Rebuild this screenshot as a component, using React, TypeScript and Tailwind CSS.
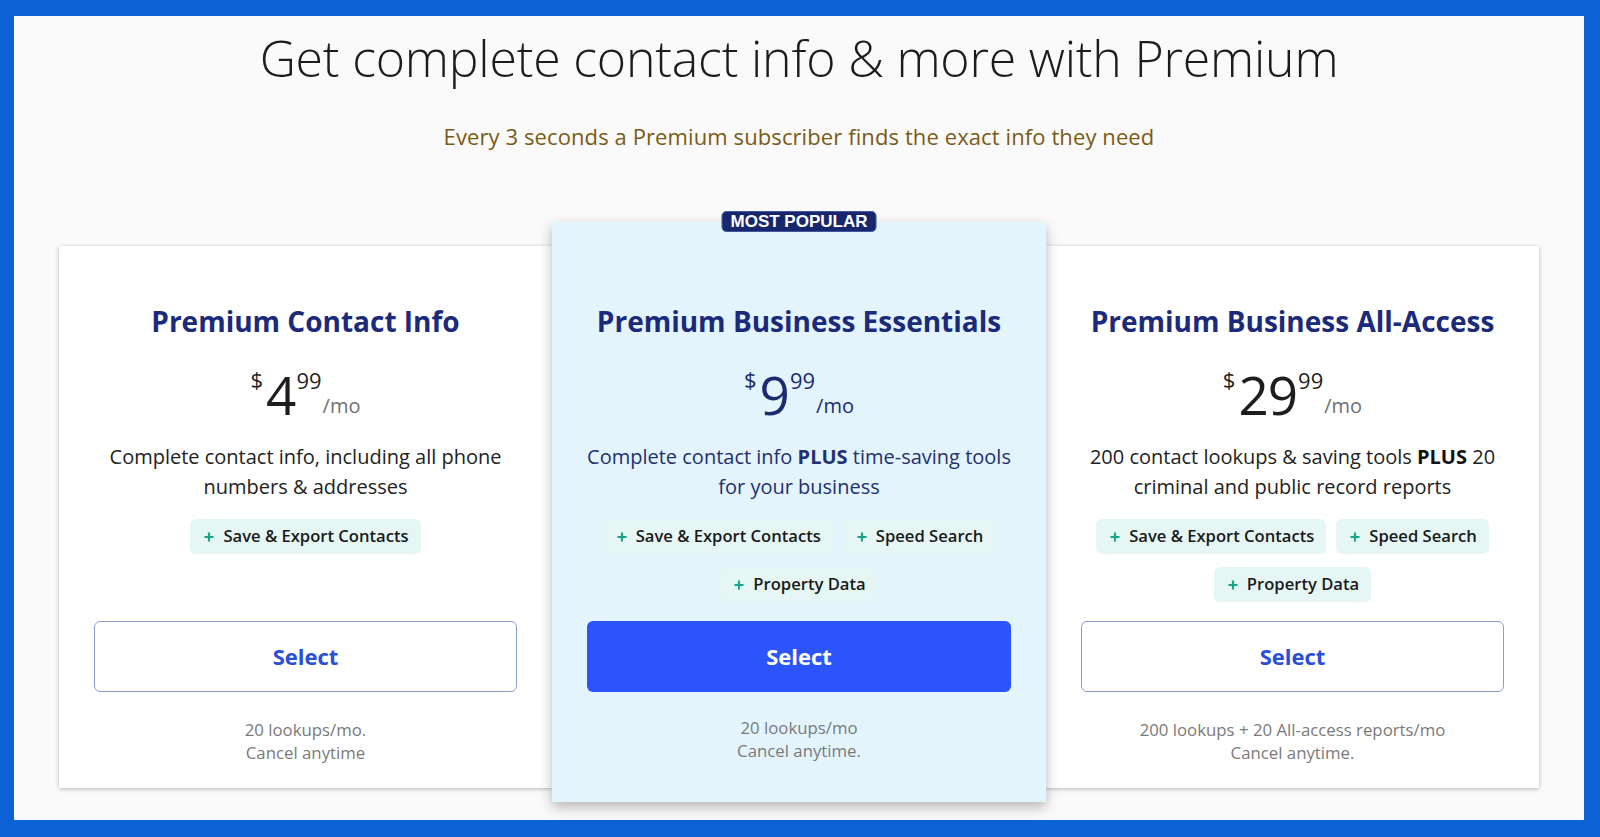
import React from "react";

type Plan = {
  title: string;
  whole: string;
  desc: React.ReactNode;
  tags: string[];
  foot: [string, string];
  featured?: boolean;
};

const plans: Plan[] = [
  {
    title: "Premium Contact Info",
    whole: "4",
    desc: (
      <>
        Complete contact info, including all phone
        <br />
        numbers &amp; addresses
      </>
    ),
    tags: ["Save & Export Contacts"],
    foot: ["20 lookups/mo.", "Cancel anytime"],
  },
  {
    title: "Premium Business Essentials",
    whole: "9",
    desc: (
      <>
        Complete contact info <b className="font-bold">PLUS</b> time-saving tools
        <br />
        for your business
      </>
    ),
    tags: ["Save & Export Contacts", "Speed Search", "Property Data"],
    foot: ["20 lookups/mo", "Cancel anytime."],
    featured: true,
  },
  {
    title: "Premium Business All-Access",
    whole: "29",
    desc: (
      <>
        200 contact lookups &amp; saving tools <b className="font-bold text-[#111]">PLUS</b> 20
        <br />
        criminal and public record reports
      </>
    ),
    tags: ["Save & Export Contacts", "Speed Search", "Property Data"],
    foot: ["200 lookups + 20 All-access reports/mo", "Cancel anytime."],
  },
];

function Tag({ label }: { label: string }) {
  return (
    <div className="h-[35px] flex items-center pl-[13px] pr-[12px] rounded-[6px] bg-[#e5f6f5] text-[16.6px] font-semibold text-[#1a1a1a] whitespace-nowrap">
      <svg width="12" height="12" viewBox="0 0 12 12" className="mr-[8px]">
        <path d="M6 1.5v9M1.5 6h9" stroke="#16a68a" strokeWidth="2.2" strokeLinecap="butt" />
      </svg>
      {label}
    </div>
  );
}

function Card({ plan }: { plan: Plan }) {
  const f = !!plan.featured;
  const priceColor = f ? "text-[#1c2a70]" : "text-[#1e1e1e]";
  return (
    <div
      className={
        f
          ? "relative z-10 w-[494px] bg-[#e3f4fd] pt-[81px] pb-[40px] px-[35px] flex flex-col items-center shadow-[0_5px_12px_rgba(0,0,0,0.28)]"
          : "w-[493px] mt-[24px] bg-white pt-[57px] pb-[24px] px-[35px] flex flex-col items-center shadow-[0_1px_4px_rgba(0,0,0,0.28)]"
      }
    >
      {f && (
        <div className="absolute -top-[11px] left-1/2 -translate-x-1/2 h-[21px] px-[8px] rounded-[5px] bg-[#17276e] border border-[#44559c] flex items-center text-white text-[17px] font-bold leading-none font-['Liberation_Sans',Arial,sans-serif] whitespace-nowrap">
          MOST POPULAR
        </div>
      )}
      <h3 className="text-[28px] leading-[36px] font-bold text-[#1b2a7a] whitespace-nowrap">
        {plan.title}
      </h3>
      <div className={"mt-[29px] h-[54px] flex justify-center items-start " + priceColor}>
        <span className="text-[22px] leading-none mt-[0px] mr-[3px]">$</span>
        <span className="text-[53px] leading-none tracking-[-1px]">{plan.whole}</span>
        <span className="text-[22px] leading-none mt-[1px] ml-[1px]">99</span>
        <span className={"text-[20px] leading-none mt-[28px] ml-[1px] " + (f ? "text-[#1c2a70]" : "text-[#707070]")}>
          /mo
        </span>
      </div>
      <p
        className={
          "mt-[20px] h-[60px] text-[20px] leading-[30px] text-center whitespace-nowrap " +
          (f ? "text-[#22306f]" : "text-[#222]")
        }
      >
        {plan.desc}
      </p>
      <div className="mt-[17px] h-[83px] w-full flex flex-wrap justify-center content-start gap-x-[10px] gap-y-[13px]">
        {plan.tags.map((t) => (
          <Tag key={t} label={t} />
        ))}
      </div>
      <button
        className={
          "mt-[19px] w-full h-[71px] rounded-[6px] text-[22px] font-bold " +
          (f
            ? "bg-[#2b55fb] text-white"
            : "bg-white border border-[#8a9dd0] text-[#2a4fd9]")
        }
      >
        Select
      </button>
      <div
        className={
          "text-[16.8px] leading-[23px] text-[#7a7a7a] text-center " +
          (f ? "mt-[24px]" : "mt-[26px]")
        }
      >
        <div>{plan.foot[0]}</div>
        <div>{plan.foot[1]}</div>
      </div>
    </div>
  );
}

export default function App() {
  return (
    <div className="w-full h-[837px] bg-[#0c62d4] pt-[16px] pl-[14px] pr-[16px] pb-[17px] font-['Open_Sans','Noto_Sans',sans-serif]">
      <div className="h-full bg-[#fafafa] flex flex-col items-center">
        <h1 className="mt-[12px] text-[50px] leading-[60px] font-light text-[#1c1c1c] whitespace-nowrap tracking-[-0.2px]">
          Get complete contact info &amp; more with Premium
        </h1>
        <p className="mt-[33px] text-[22px] leading-[30px] text-[#7b5b14] whitespace-nowrap tracking-[0.1px]">
          Every 3 seconds a Premium subscriber finds the exact info they need
        </p>
        <div className="mt-[71px] flex items-start">
          {plans.map((p) => (
            <Card key={p.title} plan={p} />
          ))}
        </div>
      </div>
    </div>
  );
}
